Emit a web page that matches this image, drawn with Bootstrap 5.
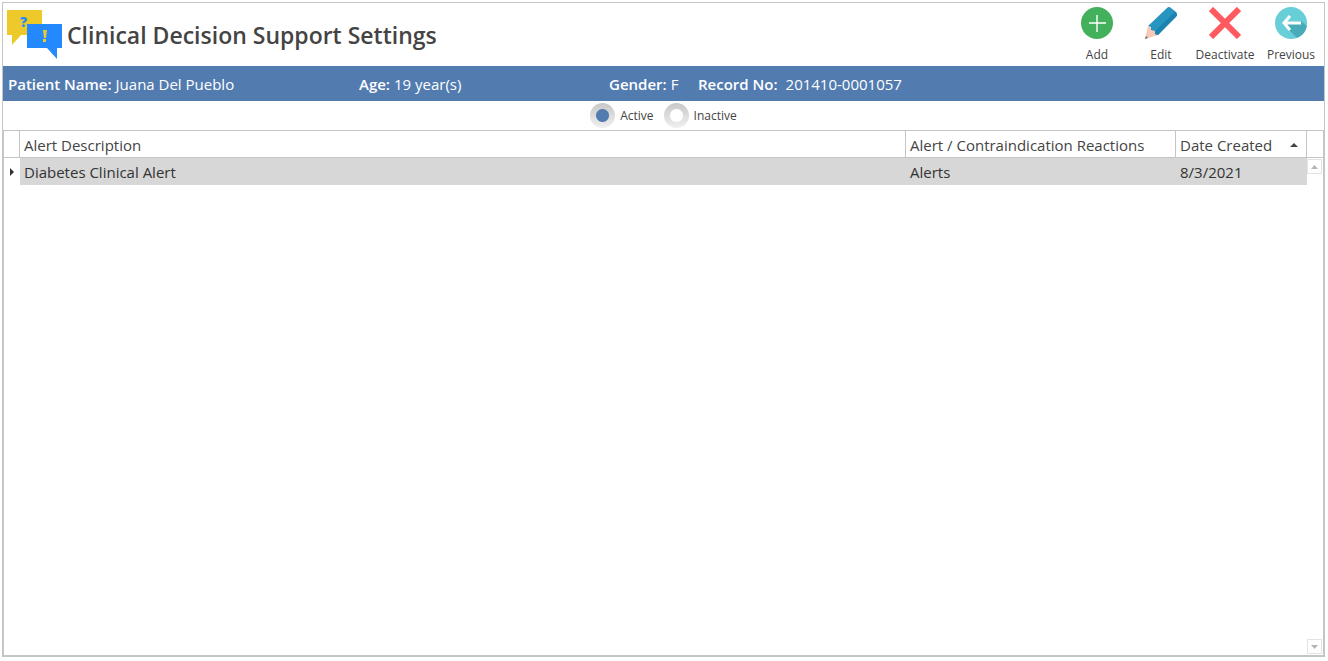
<!DOCTYPE html>
<html lang="en">
<head>
<meta charset="utf-8">
<meta name="viewport" content="width=device-width, initial-scale=1">
<title>Clinical Decision Support Settings</title>
<link href="https://cdn.jsdelivr.net/npm/bootstrap@5.3.0/dist/css/bootstrap.min.css" rel="stylesheet">
<style>
:root{--line:#c5c5c5;--band:#527bb0;--ink:#444;}
body{font-family:"Open Sans","Noto Sans",sans-serif;color:var(--ink);font-size:15px;line-height:22px;padding:2px 3px 4px 2px;background:#fff}
.window-frame{border:1px solid var(--line)}
.title-bar{min-height:63px;padding:0 1px 0 4px}
.page-title{font-size:23px;line-height:32px;font-weight:600;padding:2px 0 0 5px}
.tool{color:var(--ink);border:0;background:none;padding:0;font-size:12px;line-height:16px;width:64px}
.tool svg{display:block;margin:0 auto 8px}
.tool-back{margin-left:2px}
.band{background:var(--band);color:#fff;height:35px;padding-left:5px}
.band dt{font-weight:600}
.band dl{margin:0;display:flex;gap:4px}
.f-name{width:351px}.f-age{width:250px}.f-gender{width:89px}
.f-record dl{gap:8px}
.filter{height:29px;font-size:12px;gap:10px}
.filter label{display:flex;align-items:center;gap:5px}
.filter input{appearance:none;width:25px;height:25px;margin:0;border-radius:50%;background:radial-gradient(circle,#fff 6px,transparent 7px),linear-gradient(#c8c8c8,#f0f0f0)}
.filter input:checked{background:radial-gradient(circle,var(--band) 6px,transparent 7px),linear-gradient(#c8c8c8,#f0f0f0)}
.alerts{border:1px solid var(--line)}
.alerts table{table-layout:fixed;width:100%;border-collapse:separate;border-spacing:0}
.alerts th{font-weight:400;height:27px;padding:2px 4px 0;line-height:24px;border-right:1px solid var(--line);border-bottom:1px solid var(--line);white-space:nowrap}
.alerts td{height:27px;padding:2px 4px 0;line-height:25px;background:#d7d7d7;color:#333}
.alerts td.marker{background:#fff;padding:0 0 0 6px;line-height:0}
.c-mark{width:16px}.c-react{width:270px}.c-date{width:131px}
.scroll-col{width:16px}
.scroll-head{height:27px;border-bottom:1px solid var(--line)}
.scroll-track{padding:1px 0}
.scroll-btn{width:15px;height:15px;padding:0;border:1px solid #e3e3e3;background:#fff;display:flex;align-items:center;justify-content:center}
</style>
<script src="https://cdn.jsdelivr.net/npm/bootstrap@5.3.0/dist/js/bootstrap.bundle.min.js"></script>
</head>
<body class="vh-100 d-flex flex-column">
<main class="window-frame flex-grow-1 d-flex flex-column">
  <header class="title-bar d-flex align-items-start justify-content-between">
    <div class="d-flex align-items-center pt-1">
      <svg width="55" height="54" viewBox="0 0 55 54" aria-hidden="true">
        <path fill="#edc929" d="M0 3h35v25H14L5 38V28H0z"/>
        <text x="13" y="20" font-size="14" font-weight="800" fill="#2489ff">?</text>
        <path fill="#2489ff" d="M20 17h35v24h-5v11L40 41H20z"/>
        <path fill="#edc929" d="M36 23h4l-1 8h-2zM36 32h3v3h-3z"/>
      </svg>
      <h1 class="page-title m-0">Clinical Decision Support Settings</h1>
    </div>
    <nav class="d-flex pt-1" aria-label="Actions">
      <button class="tool" type="button">
        <svg width="32" height="32" viewBox="0 0 32 32"><circle cx="16" cy="16" r="16" fill="#43b05c"/><path d="M8 16h17M16 8v17" stroke="#fff" stroke-width="1.4"/></svg>Add</button>
      <button class="tool" type="button">
        <svg width="32" height="32" viewBox="0 0 32 32"><path fill="#f9c9b6" d="M3 19L0 32l13-4-3-5z"/><path fill="#6b6570" d="M1 29l-1 3 3-1z"/><path fill="#2795c0" d="M3 19L22 1q2-2 4 0l5 4q2 2 0 4L13 28l-3-1v-3l-4-1v-3z"/><path fill="#1b83ae" d="M30 5l1 1q2 2 0 4L13 28l-3-1v-3z"/></svg>Edit</button>
      <button class="tool" type="button">
        <svg width="32" height="32" viewBox="0 0 32 32"><path d="M2 2l28 28M30 2L2 30" stroke="#ff5a5f" stroke-width="6"/></svg>Deactivate</button>
      <button class="tool tool-back" type="button">
        <svg width="32" height="32" viewBox="0 0 32 32"><circle cx="16" cy="16" r="16" fill="#68cfd8"/><path fill="#48abb8" d="M26 14l6 5a16 16 0 0 1-10 12L8 17z"/><path d="M15 9l-6 7 6 7M9 16h17" fill="none" stroke="#fff" stroke-width="3"/></svg>Previous</button>
    </nav>
  </header>
  <section class="band d-flex align-items-center" aria-label="Patient">
    <div class="f-name"><dl><dt>Patient Name:</dt><dd class="m-0">Juana Del Pueblo</dd></dl></div>
    <div class="f-age"><dl><dt>Age:</dt><dd class="m-0">19 year(s)</dd></dl></div>
    <div class="f-gender"><dl><dt>Gender:</dt><dd class="m-0">F</dd></dl></div>
    <div class="f-record"><dl><dt>Record No:</dt><dd class="m-0">201410-0001057</dd></dl></div>
  </section>
  <form class="filter d-flex align-items-center justify-content-center">
    <label for="st-active"><input type="radio" name="status" id="st-active" checked>Active</label>
    <label for="st-inactive"><input type="radio" name="status" id="st-inactive">Inactive</label>
  </form>
  <section class="alerts flex-grow-1 d-flex align-items-stretch">
    <div class="flex-grow-1">
      <table>
        <colgroup><col class="c-mark"><col><col class="c-react"><col class="c-date"></colgroup>
        <thead><tr>
          <th></th><th scope="col">Alert Description</th><th scope="col">Alert / Contraindication Reactions</th>
          <th scope="col" aria-sort="ascending"><span class="d-flex align-items-center justify-content-between pe-1">Date Created<svg width="8" height="5" viewBox="0 0 8 5"><path fill="#444" d="M4 0l4 4H0z"/></svg></span></th>
        </tr></thead>
        <tbody><tr>
          <td class="marker"><svg width="5" height="8" viewBox="0 0 5 8"><path fill="#333" d="M0 0l4 4-4 4z"/></svg></td>
          <td>Diabetes Clinical Alert</td><td>Alerts</td><td>8/3/2021</td>
        </tr></tbody>
      </table>
    </div>
    <div class="scroll-col flex-shrink-0 d-flex flex-column">
      <div class="scroll-head"></div>
      <div class="scroll-track flex-grow-1 d-flex flex-column justify-content-between">
        <button class="scroll-btn" type="button" aria-label="Scroll up"><svg width="7" height="4" viewBox="0 0 7 4"><path fill="#b5b5b5" d="M3.500 0L7 4H0z"/></svg></button>
        <button class="scroll-btn" type="button" aria-label="Scroll down"><svg width="7" height="4" viewBox="0 0 7 4"><path fill="#b5b5b5" d="M3.500 4L7 0H0z"/></svg></button>
      </div>
    </div>
  </section>
</main>
</body>
</html>
